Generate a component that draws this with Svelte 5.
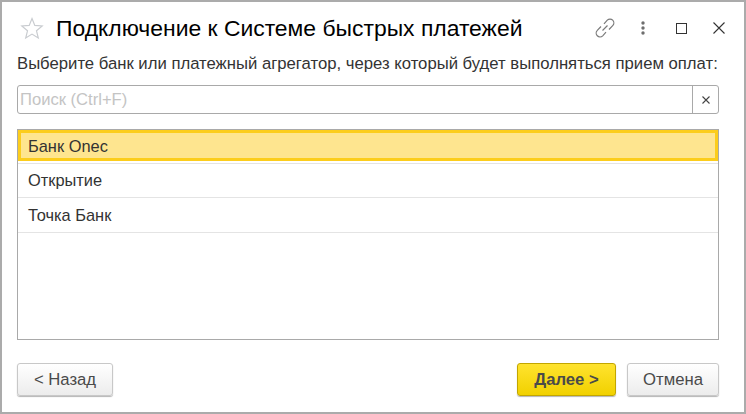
<script>
	const banks = ["Банк Onec", "Открытие", "Точка Банк"];
</script>

<div class="window">
	<header class="head">
		<svg class="star" viewBox="0 0 24 24" width="24" height="24">
			<path d="M12 2.5l2.8 6.9 7.4.6-5.7 4.8 1.8 7.2-6.3-3.9-6.3 3.9 1.8-7.2-5.7-4.8 7.4-.6z" fill="none" stroke="#c9ccd0" stroke-width="1.2" />
		</svg>
		<h1>Подключение к Системе быстрых платежей</h1>
		<div class="tools">
			<svg class="link" viewBox="0 0 20 20" width="20" height="20">
				<path d="M7.5 12.5l5-5M9 5.8l3.3-3.6a3.8 3.8 0 0 1 5.4 5.4L14 11.5M11 14.2l-3.3 3.6a3.8 3.8 0 0 1-5.4-5.4L6 8.5" fill="none" stroke="#7a7a7a" stroke-width="1.2" />
			</svg>
			<svg class="more" viewBox="0 0 4 14" width="4" height="14">
				<circle cx="2" cy="2" r="1.7" fill="#6e6e6e" />
				<circle cx="2" cy="7" r="1.7" fill="#6e6e6e" />
				<circle cx="2" cy="12" r="1.7" fill="#6e6e6e" />
			</svg>
			<span class="maximize"></span>
			<svg class="close" viewBox="0 0 12 12" width="12" height="12">
				<path d="M.5.5l11 11M11.5.5l-11 11" stroke="#333" stroke-width="1.1" />
			</svg>
		</div>
	</header>

	<main class="body">
		<p class="hint">Выберите банк или платежный агрегатор, через который будет выполняться прием оплат:</p>

		<div class="search">
			<span class="placeholder">Поиск (Ctrl+F)</span>
			<button class="clear" aria-label="Очистить">
				<svg viewBox="0 0 8 8" width="8" height="8">
					<path d="M.5.5l7 7M7.5.5l-7 7" stroke="#444" stroke-width="1.1" />
				</svg>
			</button>
		</div>

		<ul class="list">
			{#each banks as bank, i}
				<li class:selected={i === 0}>{bank}</li>
			{/each}
		</ul>

		<footer class="foot">
			<button class="btn">&lt; Назад</button>
			<div class="right">
				<button class="btn primary">Далее &gt;</button>
				<button class="btn cancel">Отмена</button>
			</div>
		</footer>
	</main>
</div>

<style>
	:global(body) {
		background: #fff;
	}

	.window {
		box-sizing: border-box;
		width: 746px;
		height: 414px;
		border: 2px solid #ababab;
		background: #fff;
		display: flex;
		flex-direction: column;
		font-family: "Liberation Sans", Arial, sans-serif;
		color: #333;
	}

	.head {
		display: flex;
		align-items: center;
		height: 52px;
		padding: 0 18px;
		flex: none;
	}
	.star {
		margin-right: 12px;
	}
	h1 {
		margin: 0;
		font-size: 22.9px;
		font-weight: 400;
		color: #000;
		white-space: nowrap;
	}
	.tools {
		margin-left: auto;
		display: flex;
		align-items: center;
	}
	.more {
		margin-left: 26px;
	}
	.maximize {
		box-sizing: border-box;
		width: 11px;
		height: 11px;
		border: 1px solid #333;
		margin-left: 31px;
	}
	.close {
		margin-left: 26px;
		margin-right: 1px;
	}

	.body {
		flex: 1;
		display: flex;
		flex-direction: column;
		padding: 0 25px 16px 15px;
		min-height: 0;
	}

	.hint {
		margin: 1px 0 12px;
		font-size: 16.7px;
		line-height: 18px;
		color: #333;
		white-space: nowrap;
	}

	.search {
		box-sizing: border-box;
		display: flex;
		align-items: center;
		height: 29px;
		border: 1px solid #a9a9a9;
		border-radius: 3px;
		font-size: 16.6px;
		width: 702px;
	}
	.placeholder {
		flex: 1;
		padding-left: 2px;
		color: #c4c4c4;
	}
	.clear {
		width: 26px;
		height: 100%;
		padding: 0;
		border: 0;
		border-left: 1px solid #a9a9a9;
		background: none;
		display: flex;
		align-items: center;
		justify-content: center;
	}

	.list {
		box-sizing: border-box;
		width: 702px;
		height: 211px;
		margin: 15px 0 0;
		padding: 0;
		list-style: none;
		border: 1px solid #a9a9a9;
		font-size: 16.4px;
	}
	.list li {
		box-sizing: border-box;
		height: 34px;
		line-height: 33px;
		padding-left: 10px;
		border-bottom: 1px solid #e4e4e4;
	}
	.list li:nth-child(3) {
		height: 35px;
		line-height: 35px;
	}
	.list li.selected {
		height: 31px;
		line-height: 27px;
		padding-left: 7px;
		background: #fee58f;
		border: 3px solid #fccd1c;
		box-shadow: 0 2px 0 #fff, 0 3px 0 #e4e4e4;
		margin: 0 0 3px;
	}

	.foot {
		width: 702px;
		display: flex;
		justify-content: space-between;
		margin-top: auto;
	}
	.right {
		display: flex;
		gap: 11px;
	}
	.btn {
		box-sizing: border-box;
		height: 33px;
		width: 96px;
		padding: 0;
		border: 1px solid #c8c8c8;
		border-radius: 3px;
		background: linear-gradient(#fff, #ececec);
		box-shadow: 0 1px 1px #b5b5b5;
		font: 16.7px "Liberation Sans", Arial, sans-serif;
		color: #4a4a4a;
	}
	.primary {
		width: 99px;
		border-color: #c2a600;
		background: linear-gradient(#ffe32e, #f1d100);
		font-weight: 700;
	}
	.cancel {
		width: 92px;
	}
</style>
